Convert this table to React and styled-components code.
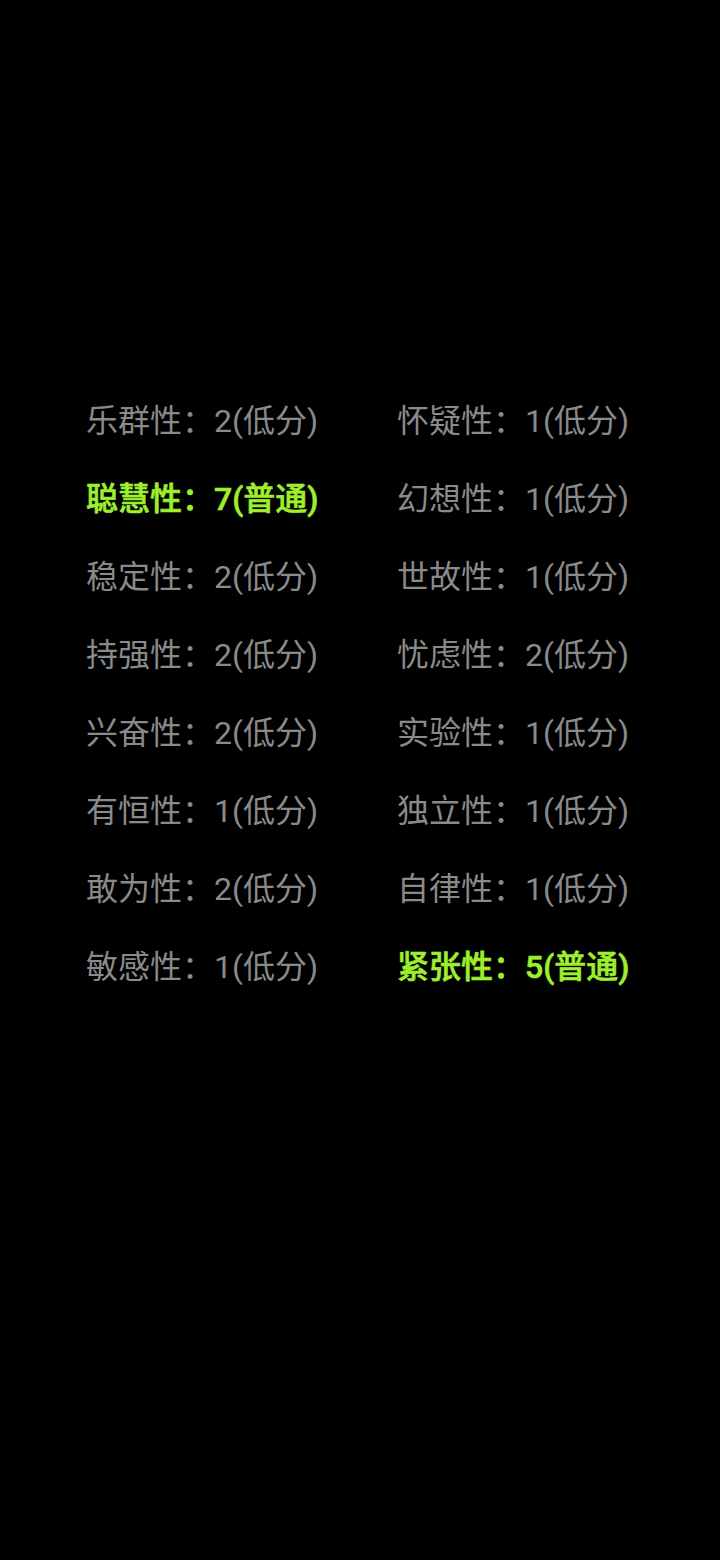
import React from "react";
import styled, { createGlobalStyle } from "styled-components";

const Global = createGlobalStyle`
  html, body { margin: 0; padding: 0; background: #000; }
  body { font-family: Roboto, "Noto Sans CJK SC", sans-serif; }
`;

const Screen = styled.div`
  width: 720px;
  height: 1560px;
  background: #000;
  box-sizing: border-box;
  padding: 399px 0 0 86px;
`;

const Grid = styled.div`
  display: grid;
  grid-template-columns: 311px auto;
  row-gap: 34px;
`;

const Item = styled.div`
  font-size: 32px;
  line-height: 44px;
  height: 44px;
  white-space: nowrap;
  color: ${(p) => (p.$hi ? "#9eef2e" : "#8a8a8a")};
  font-weight: ${(p) => (p.$hi ? 500 : 400)};
  -webkit-text-stroke: ${(p) => (p.$hi ? "0.6px #9eef2e" : "0")};
`;

const data = [
  ["乐群性", "2(低分)"], ["怀疑性", "1(低分)"],
  ["聪慧性", "7(普通)", true], ["幻想性", "1(低分)"],
  ["稳定性", "2(低分)"], ["世故性", "1(低分)"],
  ["持强性", "2(低分)"], ["忧虑性", "2(低分)"],
  ["兴奋性", "2(低分)"], ["实验性", "1(低分)"],
  ["有恒性", "1(低分)"], ["独立性", "1(低分)"],
  ["敢为性", "2(低分)"], ["自律性", "1(低分)"],
  ["敏感性", "1(低分)"], ["紧张性", "5(普通)", true],
];

export default function App() {
  return (
    <>
      <Global />
      <Screen>
        <Grid>
          {data.map(([k, v, hi]) => (
            <Item key={k} $hi={hi}>{k}：{v}</Item>
          ))}
        </Grid>
      </Screen>
    </>
  );
}
